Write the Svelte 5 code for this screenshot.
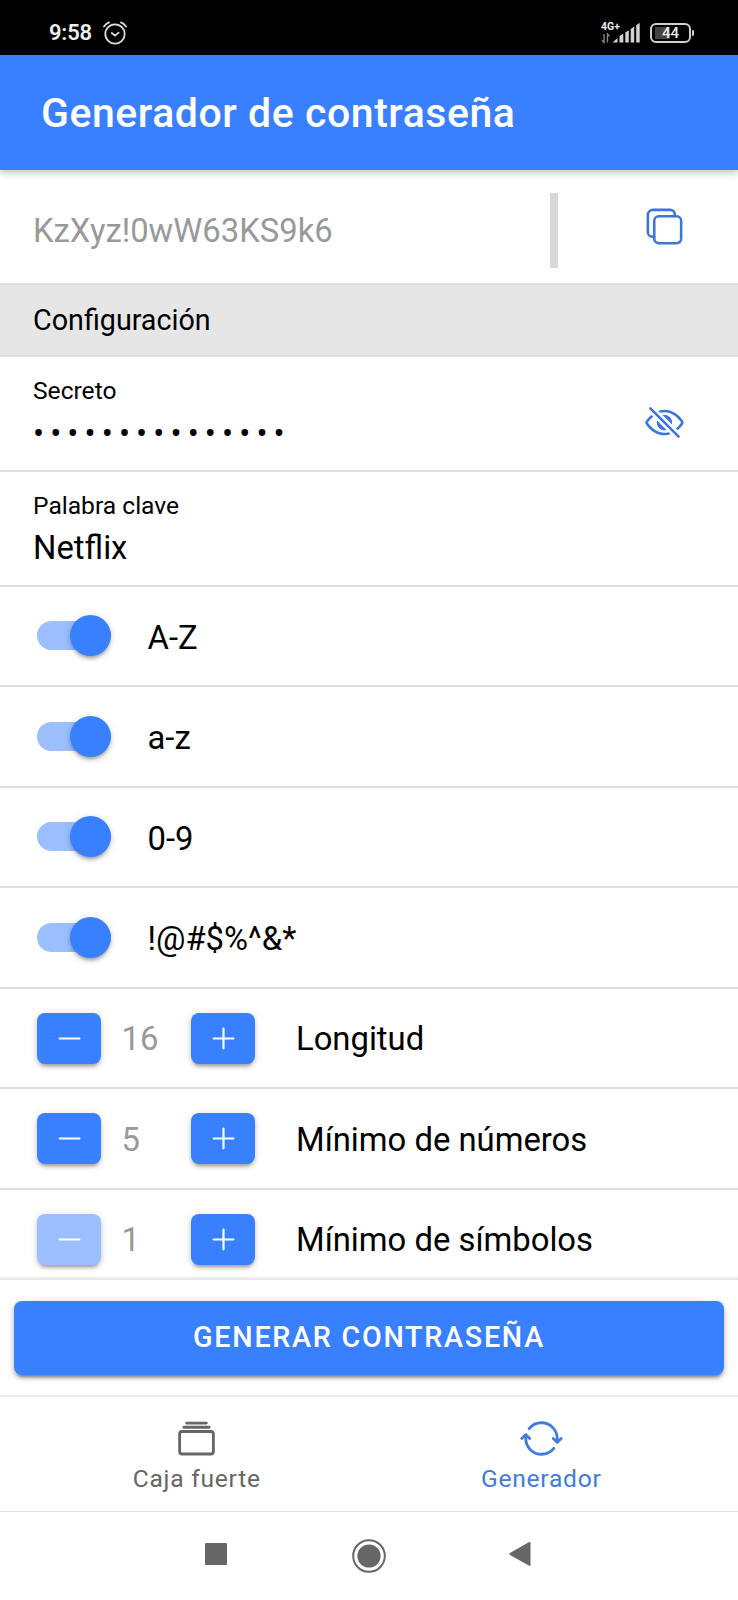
<script>
  const toggles = ['A-Z', 'a-z', '0-9', '!@#$%^&*'];
  const steppers = [
    { label: 'Longitud', value: 16, min: false },
    { label: 'Mínimo de números', value: 5, min: false },
    { label: 'Mínimo de símbolos', value: 1, min: true }
  ];
  const secret = '•'.repeat(15);
</script>

<div class="phone">
  <div class="status">
    <div class="left">
      <span class="clock">9:58</span>
      <svg class="alarm" viewBox="0 0 24 24" fill="none" stroke="#dcdcdc" stroke-width="1.8" stroke-linecap="round">
        <circle cx="12" cy="13" r="9.7" />
        <path d="M8.8 12l3.2 2.6 3.6-3M1 5.6C2.400 3.500 4 2.200 6 1.400M23 5.600C21.600 3.500 20 2.200 18 1.400" />
      </svg>
    </div>
    <div class="right">
      <div class="signal">
        <span class="net">4G+</span>
        <svg viewBox="0 0 40 22" width="40" height="22">
          <path d="M3 12v8.500l-2-2.200M6.500 20.500v-8.500l2 2.200" fill="none" stroke="#8a8a8a" stroke-width="1.300" />
          <path d="M11.500 20.500l5-4.500V20.500zM18.500 14l3.800-2.300V20.500h-3.800zM24.300 10.500l3.500-2.300V20.500h-3.500zM29.700 7l3.500-2.400V20.500h-3.500zM35.200 3.200l3.500-2.400V20.500h-3.500z" fill="#d2d2d2" />
        </svg>
      </div>
      <div class="battery"><div class="cell">44</div><i></i></div>
    </div>
  </div>

  <header><h1>Generador de contraseña</h1></header>

  <main>
    <div class="row output">
      <span class="generated">KzXyz!0wW63KS9k6</span>
      <span class="bar"></span>
      <svg class="icon" viewBox="0 0 512 512" fill="none" stroke="#3b76dc" stroke-width="32" stroke-linejoin="round" stroke-linecap="round">
        <rect x="128" y="128" width="336" height="336" rx="57" />
        <path d="M383.500 128l.5-24a56.160 56.160 0 00-56-56H112a64.190 64.190 0 00-64 64v216a56.160 56.160 0 0056 56h24" />
      </svg>
    </div>
    <div class="section">Configuración</div>
    <div class="row field">
      <div class="stack">
        <label for="secret">Secreto</label>
        <span id="secret" class="dots">{secret}</span>
      </div>
      <svg class="icon" viewBox="0 0 512 512" fill="#3b76dc">
        <path d="M432 448a15.920 15.920 0 01-11.310-4.690l-352-352a16 16 0 0122.620-22.620l352 352A16 16 0 01432 448zM255.660 384c-41.490 0-81.500-12.280-118.920-36.500-34.070-22-64.740-53.510-88.700-91v-.08c19.940-28.570 41.780-52.730 65.240-72.210a2 2 0 00.14-2.940L93.500 161.380a2 2 0 00-2.710-.12c-24.920 21-48.050 46.760-69.080 76.920a31.920 31.920 0 00-.64 35.540c26.410 41.330 60.400 76.140 98.280 100.650C162 402 207.900 416 255.660 416a239.130 239.130 0 0075.800-12.580 2 2 0 00.77-3.310l-21.580-21.580a4 4 0 00-3.830-1 204.800 204.800 0 01-51.160 6.470zM490.840 238.600c-26.460-40.920-60.790-75.680-99.270-100.530C349 110.550 302 96 255.660 96a227.340 227.340 0 00-74.890 12.830 2 2 0 00-.75 3.310l21.550 21.550a4 4 0 003.880 1 192.820 192.820 0 0150.210-6.690c40.690 0 80.580 12.430 118.550 37 34.710 22.400 65.740 53.880 89.760 91a.13.13 0 010 .16 310.720 310.720 0 01-64.120 72.730 2 2 0 00-.15 2.950l19.900 19.890a2 2 0 002.700.13 343.490 343.490 0 0068.640-78.480 32.200 32.200 0 00-.1-34.780z" />
        <path d="M256 160a95.880 95.880 0 00-21.370 2.400 2 2 0 00-1 3.380l112.590 112.560a2 2 0 003.380-1A96 96 0 00256 160zM165.780 233.660a2 2 0 00-3.380 1 96 96 0 00115 115 2 2 0 001-3.380z" />
      </svg>
    </div>
    <div class="row field">
      <div class="stack">
        <label for="keyword">Palabra clave</label>
        <span id="keyword" class="value">Netflix</span>
      </div>
    </div>
    {#each toggles as name}
      <div class="row option">
        <div class="track"><div class="thumb"></div></div>
        <span class="name">{name}</span>
      </div>
    {/each}
    {#each steppers as s}
      <div class="row option stepper">
        <button class="step" class:disabled={s.min} aria-label="Menos">
          <svg viewBox="0 0 512 512"><path d="M400 256H112" /></svg>
        </button>
        <span class="count">{s.value}</span>
        <button class="step" aria-label="Más">
          <svg viewBox="0 0 512 512"><path d="M256 112v288M400 256H112" /></svg>
        </button>
        <span class="caption">{s.label}</span>
      </div>
    {/each}
  </main>

  <footer><button class="generate">GENERAR CONTRASEÑA</button></footer>

  <nav class="tabs">
    <div class="tab">
      <svg viewBox="0 0 512 512" fill="none" stroke="currentColor" stroke-width="32" stroke-linecap="round" stroke-linejoin="round">
        <rect x="64" y="176" width="384" height="256" rx="28.870" />
        <path stroke-miterlimit="10" d="M144 80h224M112 128h288" />
      </svg>
      <span>Caja fuerte</span>
    </div>
    <div class="tab active">
      <svg viewBox="0 0 512 512" fill="none" stroke="currentColor" stroke-width="32" stroke-linecap="round" stroke-linejoin="round">
        <path d="M434.670 285.590v-29.800c0-98.730-80.240-178.790-179.200-178.790a179 179 0 00-140.140 67.360m-38.530 82v29.800C76.800 355 157 435 256 435a180.450 180.450 0 00140-66.920" />
        <path d="M32 256l44-44 46 44M480 256l-44 44-46-44" />
      </svg>
      <span>Generador</span>
    </div>
  </nav>

  <div class="system">
    <svg width="22" height="22" viewBox="0 0 22 22"><rect width="22" height="22" rx="1" fill="#666" /></svg>
    <svg class="home" width="34" height="34" viewBox="0 0 34 34"><circle cx="17" cy="17" r="15.800" fill="none" stroke="#666" stroke-width="2" /><circle cx="17" cy="17" r="11.600" fill="#666" /></svg>
    <svg class="back" width="22" height="26" viewBox="0 0 22 26"><path d="M1 12L20.200 1Q21.500.5 21.500 2v22q0 1.500-1.300.800L1 14Q-.3 13 1 12z" fill="#666" /></svg>
  </div>
</div>

<style>
  :global(body) { margin: 0; background: #fff; }
  .phone {
    width: 738px;
    height: 1600px;
    display: flex;
    flex-direction: column;
    overflow: hidden;
    background: #fff;
    color: #000;
    font-family: Roboto, sans-serif;
    font-size: 32.8px;
  }
  .phone * { box-sizing: border-box; }
  svg { display: block; flex: none; }
  button { border: 0; padding: 0; font-family: inherit; color: #fff; background: #3880ff; }

  .status {
    flex: none;
    height: 55px;
    background: #000;
    color: #ededed;
    display: flex;
    justify-content: space-between;
    padding: 10px 44px 0 49px;
  }
  .left, .right { display: flex; align-items: center; height: 46px; }
  .left { gap: 11px; }
  .clock { font-size: 22px; font-weight: 600; line-height: 46px; letter-spacing: -.2px; }
  .alarm { width: 24px; height: 24px; }
  .signal { position: relative; width: 40px; height: 22px; margin-right: 9px; }
  .net { position: absolute; left: 0; top: -1px; font-size: 10.500px; line-height: 11px; font-weight: 700; }
  .battery { display: flex; align-items: center; gap: 1px; }
  .cell {
    width: 41px;
    height: 20px;
    border: 2px solid #cfcfcf;
    border-radius: 6px;
    font-size: 15px;
    line-height: 17px;
    font-weight: 500;
    text-align: center;
    background: linear-gradient(#444, #444) 3px 2px / 15px 12px no-repeat;
  }
  .battery i { width: 2px; height: 6px; border-radius: 1px; background: #cfcfcf; }

  header {
    flex: none;
    height: 115px;
    background: #3880ff;
    color: #fff;
    display: flex;
    align-items: center;
    padding: 1px 0 0 41px;
    box-shadow: 0 3px 7px rgba(0, 0, 0, .24);
    z-index: 1;
  }
  h1 { margin: 0; font-size: 41px; font-weight: 500; letter-spacing: .550px; line-height: 48px; }

  main { flex: none; height: 1108px; overflow: hidden; }
  .row { display: flex; border-bottom: 2px solid #dedede; padding: 0 53px 0 33px; }
  .output { height: 115px; }
  .generated { width: 517px; color: #999; padding-top: 41px; line-height: 40px; }
  .bar { width: 8px; height: 75px; margin-top: 23px; background: #d8d8d8; }
  .icon { width: 41px; height: 41px; margin-left: auto; }
  .output .icon { margin-top: 36px; }
  .section {
    height: 72px;
    background: #e6e6e6;
    border-bottom: 2px solid #dfdfdf;
    padding-left: 33px;
    font-size: 28.700px;
    line-height: 71px;
  }
  .field { height: 115px; }
  .stack { display: flex; flex-direction: column; padding-top: 19px; }
  label { font-size: 24.600px; line-height: 30px; }
  .value { line-height: 40px; margin-top: 7px; }
  .dots { line-height: 40px; margin-top: 8px; letter-spacing: 6.120px; }
  .field .icon { margin-top: 45px; }

  .option { height: 100.450px; align-items: center; padding-left: 37px; }
  .track {
    position: relative;
    width: 74px;
    height: 29px;
    border-radius: 15px;
    background: #9bbfff;
    margin-top: -1px;
  }
  .thumb {
    position: absolute;
    right: 0;
    top: -6px;
    width: 41px;
    height: 41px;
    border-radius: 50%;
    background: #3880ff;
    box-shadow: 0 4px 3px -2px rgba(0, 0, 0, .2), 0 3px 4px rgba(0, 0, 0, .14), 0 1px 8px rgba(0, 0, 0, .12);
  }
  .name { margin: 3px 0 0 36.500px; }
  .stepper { padding-top: 1px; }
  .step {
    width: 64px;
    height: 51px;
    border-radius: 8px;
    display: flex;
    align-items: center;
    justify-content: center;
    box-shadow: 0 5px 3px -3px rgba(0, 0, 0, .2), 0 3px 4px rgba(0, 0, 0, .14), 0 1px 8px rgba(0, 0, 0, .12);
  }
  .step svg { width: 35px; height: 35px; }
  .step path { fill: none; stroke: #fff; stroke-width: 32; stroke-linecap: round; }
  .disabled { background: #9bbfff; }
  .count { width: 69.500px; margin: 2px 0 0 20.500px; color: #999; }
  .caption { margin: 2px 0 0 41px; }

  footer {
    flex: none;
    height: 117px;
    border-top: 2px solid #e8e8e8;
    box-shadow: 0 -1px 2px rgba(0, 0, 0, .08);
    background: #fff;
    padding: 20.500px 14px 0;
    z-index: 1;
  }
  .generate {
    display: block;
    width: 100%;
    height: 74px;
    border-radius: 8px;
    font-size: 28.700px;
    line-height: 72px;
    padding-bottom: 2px;
    font-weight: 500;
    letter-spacing: 1.722px;
    box-shadow: 0 5px 3px -3px rgba(0, 0, 0, .3), 0 3px 4px rgba(0, 0, 0, .2), 0 2px 9px rgba(0, 0, 0, .14);
  }

  .tabs {
    flex: none;
    height: 117px;
    border-top: 2px solid #ebebeb;
    border-bottom: 1px solid #e2e2e2;
    display: flex;
    justify-content: center;
    color: #666;
  }
  .tab { width: 344.500px; display: flex; flex-direction: column; align-items: center; padding-top: 18.500px; }
  .tab svg { width: 45px; height: 45px; }
  .tab span { font-size: 24.600px; line-height: 30px; letter-spacing: .738px; margin-top: 3.500px; }
  .active { color: #3f7be0; }

  .system {
    flex: 1;
    display: flex;
    align-items: center;
    justify-content: center;
    gap: 125px;
    padding-bottom: 5px;
  }
  .home { margin-top: 4px; }
  .back { margin-left: -2.500px; margin-right: 2.500px; }
</style>
